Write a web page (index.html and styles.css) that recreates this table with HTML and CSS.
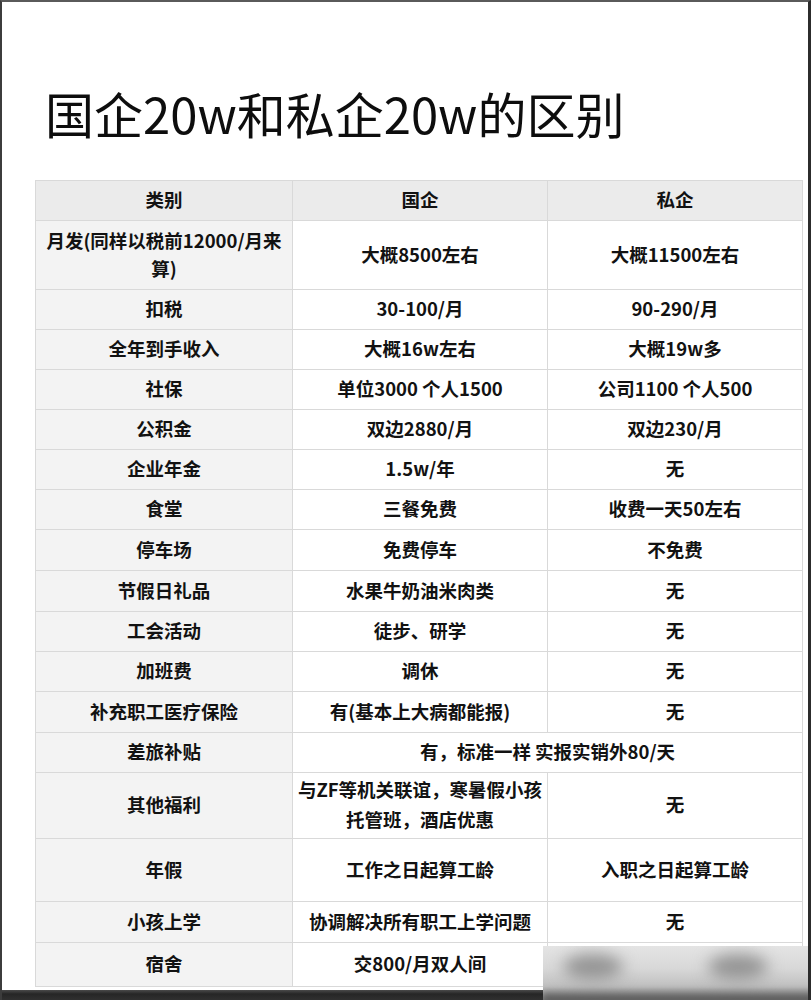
FILE: index.html
```html
<!DOCTYPE html>
<html lang="zh-CN">
<head>
<meta charset="utf-8">
<title>国企20w和私企20w的区别</title>
<link rel="stylesheet" href="styles.css">
</head>
<body>
<div class="screen">
  <h1 class="title">国企20w和私企20w的区别</h1>
  <table class="cmp">
    <colgroup><col class="c1"><col class="c2"><col class="c3"></colgroup>
    <thead>
      <tr class="h40"><th>类别</th><th>国企</th><th>私企</th></tr>
    </thead>
    <tbody>
      <tr class="h69"><td>月发(同样以税前12000/月来<br>算)</td><td>大概8500左右</td><td>大概11500左右</td></tr>
      <tr class="h40"><td>扣税</td><td>30-100/月</td><td>90-290/月</td></tr>
      <tr class="h40"><td>全年到手收入</td><td>大概16w左右</td><td>大概19w多</td></tr>
      <tr class="h40"><td>社保</td><td>单位3000 个人1500</td><td>公司1100 个人500</td></tr>
      <tr class="h40"><td>公积金</td><td>双边2880/月</td><td>双边230/月</td></tr>
      <tr class="h40"><td>企业年金</td><td>1.5w/年</td><td>无</td></tr>
      <tr class="h40"><td>食堂</td><td>三餐免费</td><td>收费一天50左右</td></tr>
      <tr class="h41"><td>停车场</td><td>免费停车</td><td>不免费</td></tr>
      <tr class="h41"><td>节假日礼品</td><td>水果牛奶油米肉类</td><td>无</td></tr>
      <tr class="h40"><td>工会活动</td><td>徒步、研学</td><td>无</td></tr>
      <tr class="h40"><td>加班费</td><td>调休</td><td>无</td></tr>
      <tr class="h41"><td>补充职工医疗保险</td><td>有(基本上大病都能报)</td><td>无</td></tr>
      <tr class="h40"><td>差旅补贴</td><td colspan="2">有，标准一样 实报实销外80/天</td></tr>
      <tr class="h66"><td>其他福利</td><td class="tight">与ZF等机关联谊，寒暑假小孩<br>托管班，酒店优惠</td><td>无</td></tr>
      <tr class="h63"><td>年假</td><td>工作之日起算工龄</td><td>入职之日起算工龄</td></tr>
      <tr class="h41"><td>小孩上学</td><td>协调解决所有职工上学问题</td><td>无</td></tr>
      <tr class="h44"><td>宿舍</td><td>交800/月双人间</td><td></td></tr>
    </tbody>
  </table>
  <div class="bottom-bar"></div>
  <div class="blur-patch"><span class="blob b1"></span><span class="blob b2"></span><span class="shade"></span></div>
</div>
</body>
</html>
```
FILE: styles.css
```css
html, body {
  margin: 0;
  padding: 0;
  background: #ffffff;
}

.screen {
  position: relative;
  width: 811px;
  height: 1000px;
  box-sizing: border-box;
  border-top: 2px solid #5a5a5a;
  border-left: 2px solid #3c3c3c;
  border-right: 3px solid #2c2c2c;
  display: flex;
  flex-direction: column;
  overflow: hidden;
  background: #ffffff;
  font-family: "Noto Sans CJK SC", "Noto Sans", sans-serif;
  color: #111111;
}

.title {
  margin: 86px 0 0 43px;
  font-size: 49px;
  font-weight: 400;
  line-height: 50px;
  color: #0d0d0d;
}

.cmp {
  margin: 42px 0 0 33px;
  width: 767px;
  border-collapse: collapse;
  table-layout: fixed;
}

.c1 { width: 257px; }
.c2 { width: 255px; }
.c3 { width: 255px; }

.cmp th,
.cmp td {
  border: 1px solid #d9d9d9;
  padding: 0 4px 3px;
  text-align: center;
  vertical-align: middle;
  font-size: 18.5px;
  font-weight: 700;
  line-height: 28px;
  color: #121212;
  background: #ffffff;
}

.cmp th {
  background: #ebebeb;
}

.cmp td:first-child {
  background: #f3f3f3;
}

.cmp td.tight {
  line-height: 30px;
}

.h40 > * { height: 36px; }
.h41 > * { height: 37px; }
.h44 > * { height: 40px; }
.h63 > * { height: 59px; }
.h66 > * { height: 62px; }
.h69 > * { height: 65px; }

.bottom-bar {
  margin-top: auto;
  height: 10px;
  background: linear-gradient(#4a4a4a, #262626 40%, #303030);
}

.blur-patch {
  position: absolute;
  left: 541px;
  top: 944px;
  width: 272px;
  height: 56px;
  overflow: hidden;
  background: linear-gradient(to bottom, #e4e4e4 0%, #d8d8d8 40%, #c0c0c0 72%, #787878 100%);
}

.blob {
  position: absolute;
  top: 8px;
  width: 60px;
  height: 26px;
  border-radius: 50%;
  background: #949494;
  filter: blur(8px);
}

.b1 { left: 20px; }
.b2 { left: 165px; }

.shade {
  position: absolute;
  left: 0;
  right: 0;
  bottom: 0;
  height: 14px;
  background: linear-gradient(rgba(60,60,60,0), rgba(60,60,60,0.8));
  filter: blur(3px);
}
```
